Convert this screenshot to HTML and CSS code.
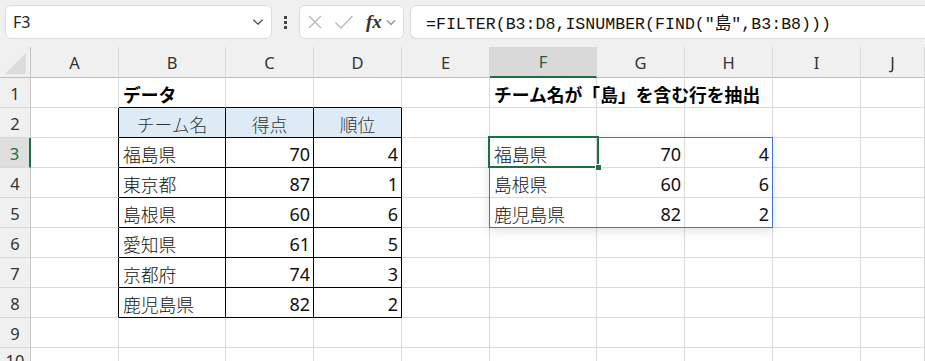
FILE: index.html
```html
<!DOCTYPE html>
<html lang="ja">
<head>
<meta charset="utf-8">
<title>Excel FILTER</title>
<link rel="stylesheet" href="styles.css">
</head>
<body>
<div class="toolbar">
  <div class="namebox">
    <span class="name">F3</span>
    <svg class="chev" width="12" height="8" viewBox="0 0 12 8"><path d="M1.5 1.8 L6 6.2 L10.5 1.8" fill="none" stroke="#444" stroke-width="1.3"/></svg>
  </div>
  <div class="dots"><i></i><i></i><i></i></div>
  <div class="fxbox">
    <svg width="16" height="16" viewBox="0 0 16 16"><path d="M2 2 L14 14 M14 2 L2 14" stroke="#b8b8b8" stroke-width="1.3" fill="none"/></svg>
    <svg width="20" height="16" viewBox="0 0 20 16"><path d="M1.5 8.5 L7 14 L18.5 2" stroke="#b8b8b8" stroke-width="1.3" fill="none"/></svg>
    <span class="fx">fx</span>
    <svg class="chev2" width="10" height="7" viewBox="0 0 10 7"><path d="M1 1.5 L5 5.5 L9 1.5" fill="none" stroke="#888" stroke-width="1.2"/></svg>
  </div>
  <div class="formula">=FILTER(B3:D8,ISNUMBER(FIND("島",B3:B8)))</div>
</div>
<div class="sheet">
  <div class="grid">
    <div class="corner"><span class="tri"></span></div>
    <div class="ch">A</div><div class="ch">B</div><div class="ch">C</div><div class="ch">D</div><div class="ch">E</div><div class="ch selc">F</div><div class="ch">G</div><div class="ch">H</div><div class="ch">I</div><div class="ch">J</div>

    <div class="rh">1</div>
    <div class="c"></div><div class="c title bb">データ</div><div class="c bb"></div><div class="c bb"></div><div class="c"></div><div class="c title wide">チーム名が「島」を含む行を抽出</div><div class="c"></div><div class="c"></div><div class="c"></div><div class="c"></div>

    <div class="rh">2</div>
    <div class="c br"></div><div class="c hd br bb">チーム名</div><div class="c hd br bb">得点</div><div class="c hd br bb">順位</div><div class="c"></div><div class="c"></div><div class="c"></div><div class="c"></div><div class="c"></div><div class="c"></div>

    <div class="rh selr">3</div>
    <div class="c br"></div><div class="c br bb">福島県</div><div class="c num br bb">70</div><div class="c num br bb">4</div><div class="c"></div><div class="c">福島県</div><div class="c num">70</div><div class="c num">4</div><div class="c"></div><div class="c"></div>

    <div class="rh">4</div>
    <div class="c br"></div><div class="c br bb">東京都</div><div class="c num br bb">87</div><div class="c num br bb">1</div><div class="c"></div><div class="c">島根県</div><div class="c num">60</div><div class="c num">6</div><div class="c"></div><div class="c"></div>

    <div class="rh">5</div>
    <div class="c br"></div><div class="c br bb">島根県</div><div class="c num br bb">60</div><div class="c num br bb">6</div><div class="c"></div><div class="c">鹿児島県</div><div class="c num">82</div><div class="c num">2</div><div class="c"></div><div class="c"></div>

    <div class="rh">6</div>
    <div class="c br"></div><div class="c br bb">愛知県</div><div class="c num br bb">61</div><div class="c num br bb">5</div><div class="c"></div><div class="c"></div><div class="c"></div><div class="c"></div><div class="c"></div><div class="c"></div>

    <div class="rh">7</div>
    <div class="c br"></div><div class="c br bb">京都府</div><div class="c num br bb">74</div><div class="c num br bb">3</div><div class="c"></div><div class="c"></div><div class="c"></div><div class="c"></div><div class="c"></div><div class="c"></div>

    <div class="rh">8</div>
    <div class="c br"></div><div class="c br bb">鹿児島県</div><div class="c num br bb">82</div><div class="c num br bb">2</div><div class="c"></div><div class="c"></div><div class="c"></div><div class="c"></div><div class="c"></div><div class="c"></div>

    <div class="rh">9</div>
    <div class="c"></div><div class="c"></div><div class="c"></div><div class="c"></div><div class="c"></div><div class="c"></div><div class="c"></div><div class="c"></div><div class="c"></div><div class="c"></div>

    <div class="rh last">10</div>
    <div class="c"></div><div class="c"></div><div class="c"></div><div class="c"></div><div class="c"></div><div class="c"></div><div class="c"></div><div class="c"></div><div class="c"></div><div class="c"></div>
  </div>
  <div class="spill"></div>
  <div class="sel"><span class="handle"></span></div>
</div>
</body>
</html>
```

FILE: styles.css
```css
* { box-sizing: border-box; }
html, body { margin: 0; padding: 0; background: #fff; overflow: hidden; }
body {
  width: 925px; height: 361px;
  font-family: "Noto Sans CJK JP", "Noto Sans", sans-serif;
  color: #000;
}
.toolbar {
  height: 47px;
  background: #f0f0f0;
  display: flex;
  align-items: flex-start;
  padding: 5px 0 0 5px;
}
.namebox {
  width: 267px; height: 34px;
  background: #fff;
  border: 1px solid #dcdcdc;
  border-radius: 6px;
  display: flex; align-items: center; justify-content: space-between;
  padding: 0 7px 0 7px;
}
.name { font-family: "Noto Sans", sans-serif; font-size: 16px; color: #222; }
.dots {
  width: 27px; height: 34px;
  display: flex; flex-direction: column; align-items: center; justify-content: center; gap: 2px;
}
.dots i { display: block; width: 3px; height: 3px; background: #444; }
.fxbox {
  width: 105px; height: 34px;
  background: #fff;
  border: 1px solid #dcdcdc;
  border-radius: 6px;
  display: flex; align-items: center;
  padding-left: 7px; gap: 11px;
}
.fx {
  font-family: "Liberation Serif", serif;
  font-style: italic; font-weight: bold;
  font-size: 19px; color: #333;
  margin-left: 1px;
}
.chev2 { margin-left: -7px; }
.formula {
  flex: 1;
  margin-left: 6px;
  height: 34px;
  background: #fff;
  border: 1px solid #dcdcdc;
  border-right: none;
  border-radius: 6px 0 0 6px;
  display: flex; align-items: center;
  padding-left: 15px;
  font-family: "Liberation Mono", "Noto Sans CJK JP", monospace;
  font-size: 16.6px; color: #111;
  white-space: nowrap;
}
.sheet { position: relative; }
.grid {
  display: grid;
  grid-template-columns: 31px 88px 107px 88px 88px 88px 107px 88px 88px 88px 1fr;
  grid-template-rows: 31px repeat(10, 30px);
}
.corner {
  background: #f0f0f0;
  border-right: 1px solid #c6c6c6;
  border-bottom: 1px solid #bdbdbd;
  position: relative;
}
.tri {
  position: absolute; right: 4px; bottom: 3px;
  width: 0; height: 0;
  border-left: 21px solid transparent;
  border-bottom: 21px solid #dcdcdc;
}
.ch {
  background: #f0f0f0;
  border-right: 1px solid #dadada;
  border-bottom: 1px solid #bdbdbd;
  display: flex; align-items: center; justify-content: center;
  font-family: "Noto Sans", sans-serif; font-size: 16.5px; color: #333;
}
.ch.selc {
  background: #d9d9d9;
  border-bottom: 2px solid #1e6e42;
  color: #1f5e3a;
}
.rh {
  background: #f0f0f0;
  border-right: 1px solid #c6c6c6;
  border-bottom: 1px solid #dadada;
  display: flex; align-items: center; justify-content: center;
  font-family: "Noto Sans", sans-serif; font-size: 16.5px; color: #333;
  padding-top: 1px;
}
.rh.last { align-items: flex-start; padding-top: 3px; line-height: 20px; }
.rh.selr {
  background: #dedede;
  border-right: 2px solid #1e6e42;
  color: #1e6e42;
}
.c {
  border-right: 1px solid #dadada;
  border-bottom: 1px solid #dadada;
  display: flex; align-items: center;
  padding: 2px 4px 0 4px;
  font-size: 17.8px;
  font-weight: 300;
  white-space: nowrap;
  color: #111;
}
.c.num { justify-content: flex-end; padding-right: 3px; font-size: 18px; font-weight: 400; font-family: "Noto Sans", sans-serif; }
.c.title { font-weight: bold; color: #000; }
.c.hd { background: #ddebf7; justify-content: center; color: #333; }
.c.br { border-right-color: #000; }
.c.bb { border-bottom-color: #000; }
.c.wide { z-index: 1; }
.spill {
  position: absolute;
  left: 489px; top: 90px;
  width: 284px; height: 91px;
  border: 1px solid #4472c4;
  box-shadow: 0 3px 10px rgba(0,0,0,0.12);
  pointer-events: none;
}
.sel {
  position: absolute;
  left: 488px; top: 89px;
  width: 111px; height: 32px;
  border: 2px solid #1e6e42;
}
.handle {
  position: absolute;
  right: -5px; bottom: -5px;
  width: 7px; height: 7px;
  background: #1e6e42;
  border: 1px solid #fff;
}
```
